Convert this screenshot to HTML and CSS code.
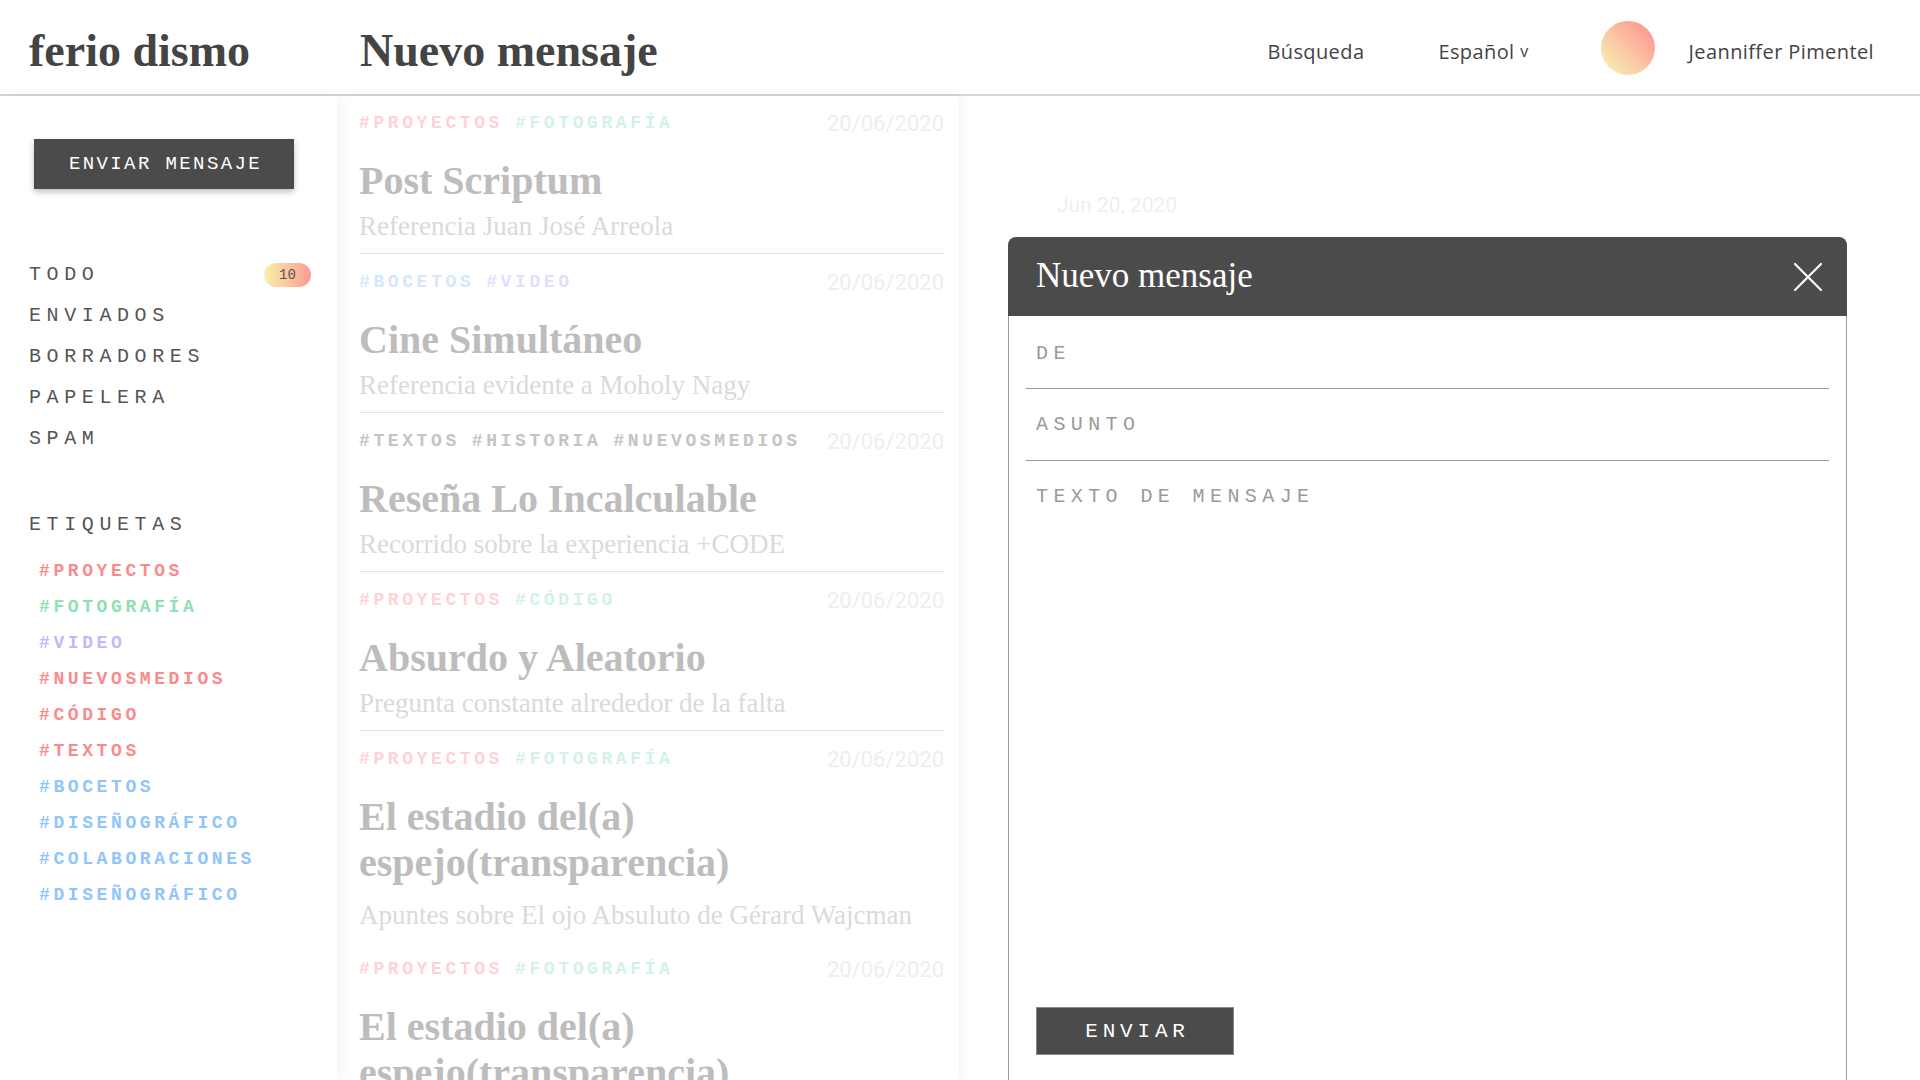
FILE: index.html
```html
<!DOCTYPE html>
<html lang="es">
<head>
<meta charset="utf-8">
<title>ferio dismo — Nuevo mensaje</title>
<link rel="stylesheet" href="styles.css">
</head>
<body>
<header class="topbar">
  <div class="brand">ferio dismo</div>
  <h1 class="page-title">Nuevo mensaje</h1>
  <nav class="top-actions">
    <span class="top-link">Búsqueda</span>
    <span class="top-link lang">Español <span class="caret">v</span></span>
    <span class="avatar"></span>
    <span class="top-link user">Jeanniffer Pimentel</span>
  </nav>
</header>

<main class="layout">
  <aside class="sidebar">
    <button class="btn-compose">ENVIAR MENSAJE</button>
    <ul class="folders">
      <li class="folder"><span>TODO</span><span class="badge">10</span></li>
      <li class="folder"><span>ENVIADOS</span></li>
      <li class="folder"><span>BORRADORES</span></li>
      <li class="folder"><span>PAPELERA</span></li>
      <li class="folder"><span>SPAM</span></li>
    </ul>
    <div class="section-title">ETIQUETAS</div>
    <ul class="tags">
      <li class="tag red">#PROYECTOS</li>
      <li class="tag green">#FOTOGRAFÍA</li>
      <li class="tag purple">#VIDEO</li>
      <li class="tag red">#NUEVOSMEDIOS</li>
      <li class="tag red">#CÓDIGO</li>
      <li class="tag red">#TEXTOS</li>
      <li class="tag blue">#BOCETOS</li>
      <li class="tag blue">#DISEÑOGRÁFICO</li>
      <li class="tag blue">#COLABORACIONES</li>
      <li class="tag blue">#DISEÑOGRÁFICO</li>
    </ul>
  </aside>

  <section class="list">
    <article class="item">
      <div class="meta"><div class="item-tags"><span class="t-red">#PROYECTOS</span><span class="t-green">#FOTOGRAFÍA</span></div><span class="date">20/06/2020</span></div>
      <h2 class="item-title">Post Scriptum</h2>
      <p class="item-sub">Referencia Juan José Arreola</p>
    </article>
    <article class="item">
      <div class="meta"><div class="item-tags"><span class="t-blue">#BOCETOS</span><span class="t-purple">#VIDEO</span></div><span class="date">20/06/2020</span></div>
      <h2 class="item-title">Cine Simultáneo</h2>
      <p class="item-sub">Referencia evidente a Moholy Nagy</p>
    </article>
    <article class="item">
      <div class="meta"><div class="item-tags"><span class="t-gray">#TEXTOS</span><span class="t-gray">#HISTORIA</span><span class="t-gray">#NUEVOSMEDIOS</span></div><span class="date">20/06/2020</span></div>
      <h2 class="item-title">Reseña Lo Incalculable</h2>
      <p class="item-sub">Recorrido sobre la experiencia +CODE</p>
    </article>
    <article class="item">
      <div class="meta"><div class="item-tags"><span class="t-red">#PROYECTOS</span><span class="t-green">#CÓDIGO</span></div><span class="date">20/06/2020</span></div>
      <h2 class="item-title">Absurdo y Aleatorio</h2>
      <p class="item-sub">Pregunta constante alrededor de la falta</p>
    </article>
    <article class="item item-open">
      <div class="meta"><div class="item-tags"><span class="t-red">#PROYECTOS</span><span class="t-green">#FOTOGRAFÍA</span></div><span class="date">20/06/2020</span></div>
      <h2 class="item-title">El estadio del(a)<br>espejo(transparencia)</h2>
      <p class="item-sub sub-spaced">Apuntes sobre El ojo Absuluto de Gérard Wajcman</p>
    </article>
    <article class="item">
      <div class="meta"><div class="item-tags"><span class="t-red">#PROYECTOS</span><span class="t-green">#FOTOGRAFÍA</span></div><span class="date">20/06/2020</span></div>
      <h2 class="item-title">El estadio del(a)<br>espejo(transparencia)</h2>
      <p class="item-sub">Apuntes sobre El ojo Absuluto de Gérard Wajcman</p>
    </article>
  </section>

  <section class="reader">
    <div class="reader-date">Jun 20, 2020</div>

    <div class="composer">
      <div class="composer-head">
        <span class="composer-title">Nuevo mensaje</span>
        <svg class="close" width="30" height="30" viewBox="0 0 30 30" aria-label="Cerrar">
          <path d="M2 2 L28 28 M28 2 L2 28" stroke="#fff" stroke-width="2.2" stroke-linecap="round" fill="none"/>
        </svg>
      </div>
      <div class="composer-body">
        <div class="field">DE</div>
        <div class="field">ASUNTO</div>
        <div class="field field-text">TEXTO DE MENSAJE</div>
        <button class="btn-send">ENVIAR</button>
      </div>
    </div>
  </section>
</main>
</body>
</html>
```
FILE: styles.css
```css
* { box-sizing: border-box; }

html, body {
  margin: 0;
  padding: 0;
  width: 1920px;
  height: 1080px;
  overflow: hidden;
  background: #fff;
  color: #444;
}

/* ---------- header ---------- */
.topbar {
  display: flex;
  align-items: center;
  height: 96px;
  border-bottom: 2px solid #d6d6d6;
  padding-top: 6px;
}

.brand {
  width: 337px;
  padding-left: 29px;
  font-family: "Liberation Serif", "DejaVu Serif", serif;
  font-weight: 700;
  font-size: 46px;
  color: #444;
}

.page-title {
  margin: 0;
  padding-left: 23px;
  font-family: "Liberation Serif", "DejaVu Serif", serif;
  font-weight: 700;
  font-size: 46px;
  color: #444;
}

.top-actions {
  margin-left: auto;
  display: flex;
  align-items: center;
  padding-right: 46px;
  margin-top: 2px;
}

.top-link {
  font-family: "Open Sans", "Liberation Sans", sans-serif;
  font-size: 20px;
  font-weight: 500;
  letter-spacing: 0.4px;
  color: #444;
}

.lang { margin-left: 74px; }

.caret {
  font-size: 16px;
  position: relative;
  top: -2px;
}

.avatar {
  width: 54px;
  height: 54px;
  border-radius: 50%;
  margin-left: 72px;
  margin-top: -6px;
  background: linear-gradient(45deg, #f7eeb1 10%, #fbc2a2 50%, #fd958f 92%);
}

.user { margin-left: 34px; }

/* ---------- layout ---------- */
.layout {
  display: flex;
  height: 984px;
}

/* ---------- sidebar ---------- */
.sidebar {
  width: 337px;
  flex-shrink: 0;
  background: #fff;
  position: relative;
  z-index: 2;
  box-shadow: 3px 0 12px rgba(0, 0, 0, 0.055);
  padding: 43px 26px 0 29px;
}

.btn-compose {
  display: block;
  margin-left: 5px;
  width: 260px;
  height: 50px;
  border: none;
  background: #4b4b4b;
  color: #fff;
  font-family: "Liberation Mono", "DejaVu Sans Mono", monospace;
  font-size: 19px;
  letter-spacing: 2.4px;
  box-shadow: 0 3px 6px rgba(0, 0, 0, 0.25);
  padding: 0 0 0 3px;
}

.folders, .tags {
  list-style: none;
  margin: 0;
  padding: 0;
}

.folders { margin-top: 65px; }

.folder {
  display: flex;
  align-items: center;
  justify-content: space-between;
  height: 41px;
  font-family: "Liberation Mono", "DejaVu Sans Mono", monospace;
  font-size: 20px;
  letter-spacing: 5.6px;
  color: #555;
}

.badge {
  width: 47px;
  height: 24px;
  border-radius: 12px;
  background: linear-gradient(90deg, #f6f1ab 0%, #fcc79e 50%, #fc9b93 100%);
  font-size: 14px;
  letter-spacing: 0;
  color: #555;
  display: flex;
  align-items: center;
  justify-content: center;
}

.section-title {
  margin-top: 45px;
  height: 41px;
  line-height: 41px;
  font-family: "Liberation Mono", "DejaVu Sans Mono", monospace;
  font-size: 20px;
  letter-spacing: 5.6px;
  color: #555;
}

.tags {
  margin-top: 8px;
  padding-left: 10px;
}

.tag {
  height: 36px;
  line-height: 36px;
  font-family: "Liberation Mono", "DejaVu Sans Mono", monospace;
  font-weight: 700;
  font-size: 18px;
  letter-spacing: 3.6px;
}

.red { color: #f88c8c; }
.green { color: #8fe0b5; }
.purple { color: #c6b6fb; }
.blue { color: #8fc5fa; }

/* ---------- message list ---------- */
.list {
  width: 622px;
  flex-shrink: 0;
  background: #fff;
  position: relative;
  z-index: 1;
  box-shadow: 3px 0 12px rgba(0, 0, 0, 0.05);
  padding: 0 15px 0 22px;
  overflow: hidden;
}

.item {
  padding: 16px 0 11px;
  border-bottom: 1px solid #e3e3e3;
}

.item:first-child { padding-top: 15px; }

.item-open {
  border-bottom: none;
  padding-bottom: 10px;
}

.meta {
  display: flex;
  align-items: center;
  justify-content: space-between;
  height: 24px;
}

.item-tags {
  display: flex;
  gap: 12px;
  font-family: "Liberation Mono", "DejaVu Sans Mono", monospace;
  font-weight: 700;
  font-size: 18px;
  letter-spacing: 3.6px;
}

.t-red { color: #fdd3d3; }
.t-green { color: #d2f3e3; }
.t-blue { color: #d3e7fd; }
.t-purple { color: #e4ddfd; }
.t-gray { color: #c4c4c4; }

.date {
  font-family: Roboto, "Liberation Sans", sans-serif;
  font-size: 22px;
  color: #eeeeee;
}

.item-title {
  margin: 23px 0 0;
  font-family: "Liberation Serif", "DejaVu Serif", serif;
  font-weight: 700;
  font-size: 40px;
  line-height: 46px;
  color: #bdbdbd;
}

.item-sub {
  margin: 6px 0 0;
  font-family: "Liberation Serif", "DejaVu Serif", serif;
  font-size: 27px;
  line-height: 32px;
  color: #dadada;
}

.sub-spaced { margin-top: 13px; }

/* ---------- reader / composer ---------- */
.reader {
  flex: 1;
  position: relative;
  padding: 97px 0 0 98px;
}

.reader-date {
  font-family: Roboto, "Liberation Sans", sans-serif;
  font-size: 21px;
  color: #efefef;
}

.composer {
  position: absolute;
  left: 49px;
  top: 141px;
  width: 839px;
  height: 900px;
  background: #fff;
}

.composer-head {
  height: 79px;
  background: #4b4b4b;
  border-radius: 8px 8px 0 0;
  display: flex;
  align-items: center;
  justify-content: space-between;
  padding: 0 24px 0 28px;
}

.composer-title {
  font-family: "Liberation Serif", "DejaVu Serif", serif;
  font-size: 35px;
  color: #fff;
  margin-top: -2px;
}

.composer-body {
  height: 821px;
  border-left: 1px solid #9a9a9a;
  border-right: 1px solid #9a9a9a;
  padding: 1px 17px 0 17px;
}

.field {
  padding: 24px 10px 23px;
  line-height: 24px;
  border-bottom: 1px solid #9a9a9a;
  font-family: "Liberation Mono", "DejaVu Sans Mono", monospace;
  font-size: 20px;
  letter-spacing: 5.4px;
  color: #9a9a9a;
}

.field:first-child { padding-top: 25px; padding-bottom: 22px; }

.field-text {
  height: 530px;
  border-bottom: none;
}

.btn-send {
  display: block;
  margin: 16px 0 0 10px;
  width: 198px;
  height: 48px;
  background: #4b4b4b;
  border: 1px solid #888;
  color: #fff;
  font-family: "Liberation Mono", "DejaVu Sans Mono", monospace;
  font-size: 21px;
  letter-spacing: 4.8px;
  padding: 0 0 0 5px;
}
```
